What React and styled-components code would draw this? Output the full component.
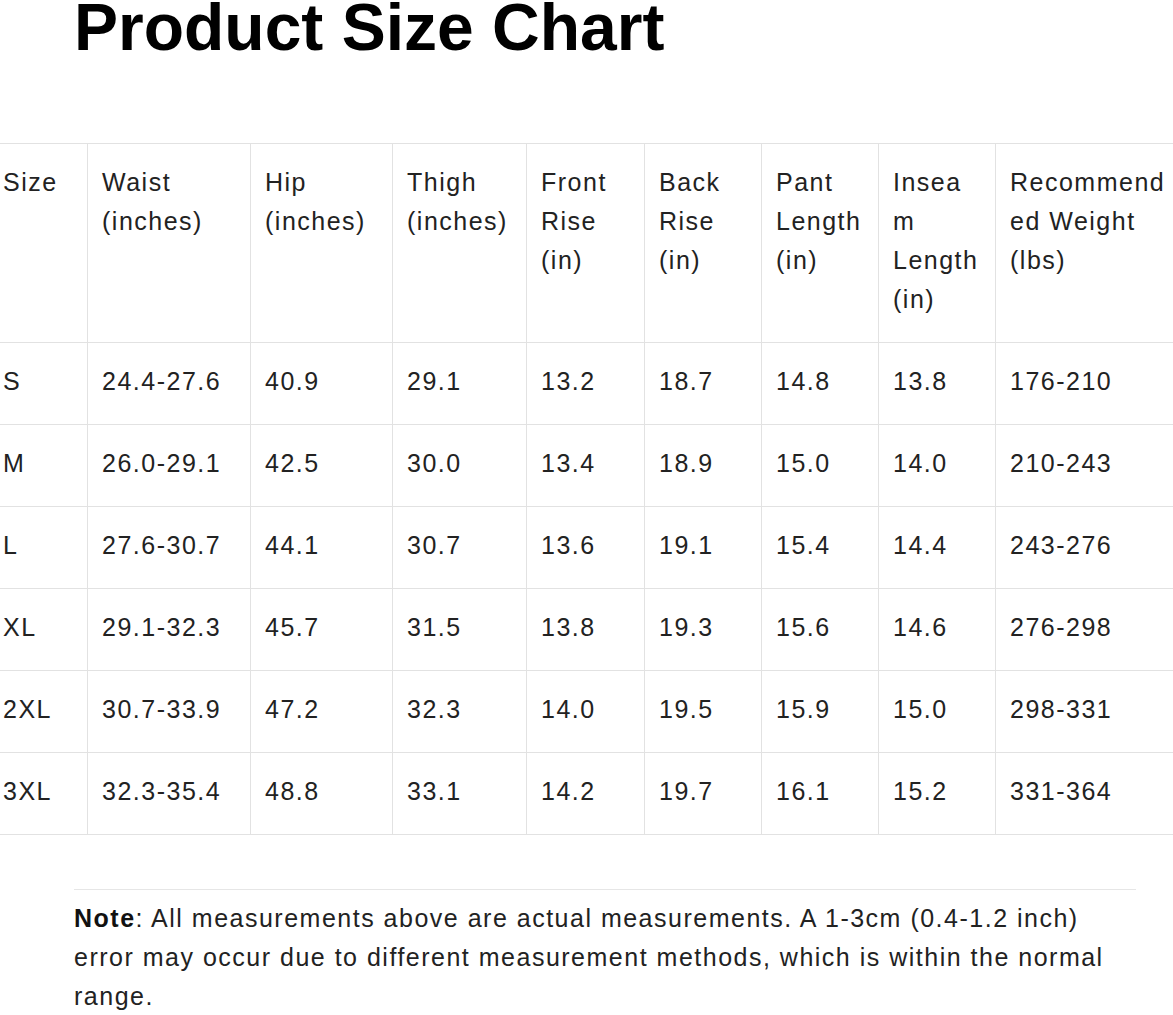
import React from "react";
import styled, { createGlobalStyle } from "styled-components";

const Global = createGlobalStyle`
  html, body { margin: 0; padding: 0; background: #fff; }
  body { overflow: hidden; font-family: "Liberation Sans", Arial, sans-serif; color: #222; }
`;

const Page = styled.div`
  display: flex;
  flex-direction: column;
  width: 1173px;
`;

const Title = styled.h1`
  margin: -6px 0 0 74px;
  font-size: 66px;
  line-height: 66px;
  font-weight: 700;
  color: #000;
`;

const Grid = styled.div`
  display: grid;
  grid-template-columns: 99px 163px 142px 134px 118px 117px 117px 117px 190px;
  margin: 83px 0 0 -12px;
  border-top: 1px solid #e2e2e2;
  border-left: 1px solid #e2e2e2;
  width: max-content;
`;

const Cell = styled.div`
  box-sizing: border-box;
  padding: 19px 14px 23px;
  border-right: 1px solid #e2e2e2;
  border-bottom: 1px solid #e2e2e2;
  font-size: 25px;
  line-height: 39px;
  letter-spacing: 1.5px;
  color: #222;
  overflow-wrap: anywhere;
`;

const Note = styled.div`
  margin: 54px 0 0 74px;
  width: 1062px;
  border-top: 1px solid #e6e6e6;
  padding-top: 9px;
  font-size: 25px;
  line-height: 39px;
  letter-spacing: 1.5px;
  color: #222;
`;

const Strong = styled.strong`
  font-weight: 700;
  color: #111;
`;

const headers = [
  "Size",
  "Waist (inches)",
  "Hip (inches)",
  "Thigh (inches)",
  "Front Rise (in)",
  "Back Rise (in)",
  "Pant Length (in)",
  "Inseam Length (in)",
  "Recommended Weight (lbs)",
];

const rows = [
  ["S", "24.4-27.6", "40.9", "29.1", "13.2", "18.7", "14.8", "13.8", "176-210"],
  ["M", "26.0-29.1", "42.5", "30.0", "13.4", "18.9", "15.0", "14.0", "210-243"],
  ["L", "27.6-30.7", "44.1", "30.7", "13.6", "19.1", "15.4", "14.4", "243-276"],
  ["XL", "29.1-32.3", "45.7", "31.5", "13.8", "19.3", "15.6", "14.6", "276-298"],
  ["2XL", "30.7-33.9", "47.2", "32.3", "14.0", "19.5", "15.9", "15.0", "298-331"],
  ["3XL", "32.3-35.4", "48.8", "33.1", "14.2", "19.7", "16.1", "15.2", "331-364"],
];

export default function App() {
  return (
    <Page>
      <Global />
      <Title>Product Size Chart</Title>
      <Grid>
        {headers.map((h) => (
          <Cell key={h}>{h}</Cell>
        ))}
        {rows.map((r) =>
          r.map((v, i) => <Cell key={r[0] + i}>{v}</Cell>)
        )}
      </Grid>
      <Note>
        <Strong>Note</Strong>: All measurements above are actual measurements. A
        1-3cm (0.4-1.2 inch) error may occur due to different measurement
        methods, which is within the normal range.
      </Note>
    </Page>
  );
}
